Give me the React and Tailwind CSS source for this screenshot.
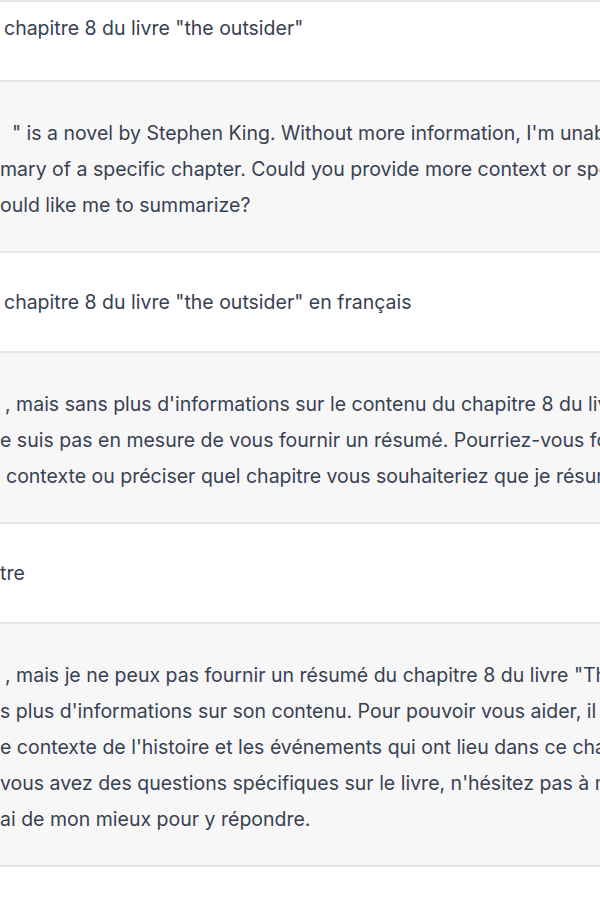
import React from "react";

const messages = [
  {
    role: "user",
    first: true,
    lines: [{ pl: "pl-[4px]", text: 'chapitre 8 du livre "the outsider"' }],
  },
  {
    role: "assistant",
    lines: [
      { pl: "pl-[12px]", text: "\" is a novel by Stephen King. Without more information, I'm unable to provide" },
      { pl: "pl-0", text: "mary of a specific chapter. Could you provide more context or specify which" },
      { pl: "pl-0", text: "ould like me to summarize?" },
    ],
  },
  {
    role: "user",
    lines: [{ pl: "pl-[4px]", text: 'chapitre 8 du livre "the outsider" en français' }],
  },
  {
    role: "assistant",
    lines: [
      { pl: "pl-[5px]", text: ", mais sans plus d'informations sur le contenu du chapitre 8 du livre" },
      { pl: "pl-0", text: "e suis pas en mesure de vous fournir un résumé. Pourriez-vous fournir" },
      { pl: "pl-[6px]", text: "contexte ou préciser quel chapitre vous souhaiteriez que je résume ?" },
    ],
  },
  {
    role: "user",
    lines: [{ pl: "pl-0", text: "tre" }],
  },
  {
    role: "assistant",
    lines: [
      { pl: "pl-[5px]", text: ', mais je ne peux pas fournir un résumé du chapitre 8 du livre "The Outsider"' },
      { pl: "pl-0", text: "s plus d'informations sur son contenu. Pour pouvoir vous aider, il serait" },
      { pl: "pl-0", text: "e contexte de l'histoire et les événements qui ont lieu dans ce chapitre" },
      { pl: "pl-0", text: "vous avez des questions spécifiques sur le livre, n'hésitez pas à me les" },
      { pl: "pl-0", text: "ai de mon mieux pour y répondre." },
    ],
  },
];

export default function App() {
  return (
    <div className="w-[600px] h-[900px] overflow-hidden bg-white font-['Inter',sans-serif] text-[19.5px] leading-[36px] text-[#374151]">
      <div className="h-[2px] bg-[#e5e5e5]" />
      {messages.map((m, i) => (
        <div
          key={i}
          className={`border-b-2 border-[#e5e5e5] ${m.role === "assistant" ? "bg-[#f7f7f8] pt-[33px] pb-[28px]" : "bg-white"} ${m.role === "user" ? (m.first ? "pt-[8px] pb-[34px]" : "pt-[31px] pb-[31px]") : ""}`}
        >
          {m.lines.map((l, j) => (
            <div key={j} className={`whitespace-nowrap overflow-hidden ${l.pl}`}>
              {l.text}
            </div>
          ))}
        </div>
      ))}
    </div>
  );
}
